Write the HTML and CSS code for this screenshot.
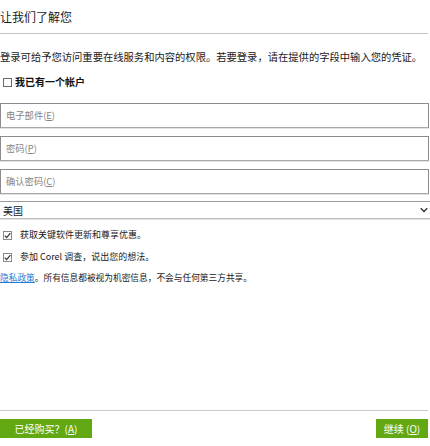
FILE: index.html
```html
<!DOCTYPE html>
<html lang="zh-CN">
<head>
<meta charset="utf-8">
<link rel="stylesheet" href="styles.css">
</head>
<body>
<div class="page">
  <header class="head">让我们了解您</header>
  <p class="intro">登录可给予您访问重要在线服务和内容的权限。若要登录，请在提供的字段中输入您的凭证。</p>
  <label class="account"><span class="box"></span><span>我已有一个帐户</span></label>
  <div class="fields">
    <div class="field">电子部件(<u>E</u>)</div>
    <div class="field">密码(<u>P</u>)</div>
    <div class="field">确认密码(<u>C</u>)</div>
  </div>
  <div class="select"><span>美国</span>
    <svg class="chev" width="8" height="6" viewBox="0 0 8 6"><path d="M0.8 1.2 L4 4.4 L7.2 1.2" fill="none" stroke="#333" stroke-width="1.4"/></svg>
  </div>
  <div class="opt"><span class="box checked"><svg width="9" height="9" viewBox="0 0 9 9"><path d="M1.8 4.6 L3.6 6.6 L7.4 2.2" fill="none" stroke="#333" stroke-width="1.2"/></svg></span><span>获取关键软件更新和尊享优惠。</span></div>
  <div class="opt"><span class="box checked"><svg width="9" height="9" viewBox="0 0 9 9"><path d="M1.8 4.6 L3.6 6.6 L7.4 2.2" fill="none" stroke="#333" stroke-width="1.2"/></svg></span><span>参加 Corel 调查，说出您的想法。</span></div>
  <p class="privacy"><a class="link">隐私政策</a>。所有信息都被视为机密信息，不会与任何第三方共享。</p>
  <footer class="foot">
    <button class="btn btn-left">已经购买？(<u>A</u>)</button>
    <button class="btn btn-right">继续 (<u>O</u>)</button>
  </footer>
</div>
</body>
</html>
```

FILE: styles.css
```css
html, body {
  margin: 0;
  padding: 0;
  background: #fff;
}
body {
  font-family: "Noto Sans CJK SC", "Noto Sans", sans-serif;
  color: #222;
}
.page {
  width: 430px;
  height: 446px;
  display: flex;
  flex-direction: column;
  box-sizing: border-box;
  overflow: hidden;
}
.head {
  font-size: 12px;
  line-height: 16px;
  padding: 9px 0 8px 0;
  margin-right: 2px;
  border-bottom: 1px solid #c4c4c4;
  color: #1a1a1a;
}
.intro {
  margin: 16px 0 0 0;
  font-size: 10.3px;
  line-height: 14px;
  white-space: nowrap;
  color: #1a1a1a;
}
.account {
  margin-top: 11px;
  display: flex;
  align-items: center;
  gap: 3px;
  padding-left: 3px;
  font-size: 10px;
  line-height: 14px;
  font-weight: bold;
  color: #111;
}
.box {
  width: 9px;
  height: 9px;
  border: 1px solid #6a6a6a;
  box-sizing: border-box;
  display: inline-flex;
  align-items: center;
  justify-content: center;
  flex: none;
  background: #fff;
}
.box.checked {
  border-color: #8a8a8a;
}
.box svg {
  flex: none;
}
.fields {
  margin-top: 14px;
  display: flex;
  flex-direction: column;
  gap: 8px;
  margin-right: 1px;
}
.field {
  height: 25px;
  box-sizing: border-box;
  border: 1px solid #8c8c8c;
  border-bottom-color: #a8a8a8;
  box-shadow: 0 1px 0 #e2e2e2;
  padding-left: 5px;
  font-size: 9.3px;
  line-height: 23px;
  color: #858585;
}
.field u {
  text-decoration: underline;
}
.select {
  margin-top: 7px;
  height: 18px;
  box-sizing: border-box;
  border-top: 1px solid #9a9a9a;
  border-bottom: 1px solid #bdbdbd;
  box-shadow: 0 1px 0 #e4e4e4;
  display: flex;
  align-items: center;
  justify-content: space-between;
  padding: 0 2px 0 3px;
  font-size: 10px;
  color: #1a1a1a;
}
.chev {
  display: block;
}
.opt {
  display: flex;
  align-items: center;
  gap: 8px;
  padding-left: 3px;
  font-size: 9px;
  line-height: 14px;
  color: #1a1a1a;
}
.select + .opt {
  margin-top: 9px;
}
.opt + .opt {
  margin-top: 8px;
}
.privacy {
  margin: 7px 0 0 0;
  font-size: 8.7px;
  line-height: 14px;
  color: #1a1a1a;
  white-space: nowrap;
}
.link {
  color: #1f7ad0;
  text-decoration: underline;
}
.foot {
  margin-top: auto;
  border-top: 1px solid #c8c8c8;
  margin-right: 2px;
  padding: 8px 0 8px 0;
  display: flex;
  justify-content: space-between;
}
.btn {
  height: 19px;
  border: none;
  background: #62a812;
  color: #fff;
  font-family: "Noto Sans CJK SC", "Noto Sans", sans-serif;
  font-size: 10px;
  line-height: 19px;
  padding: 0;
  margin: 0;
}
.btn-left {
  width: 92px;
}
.btn-right {
  width: 52px;
}
```
